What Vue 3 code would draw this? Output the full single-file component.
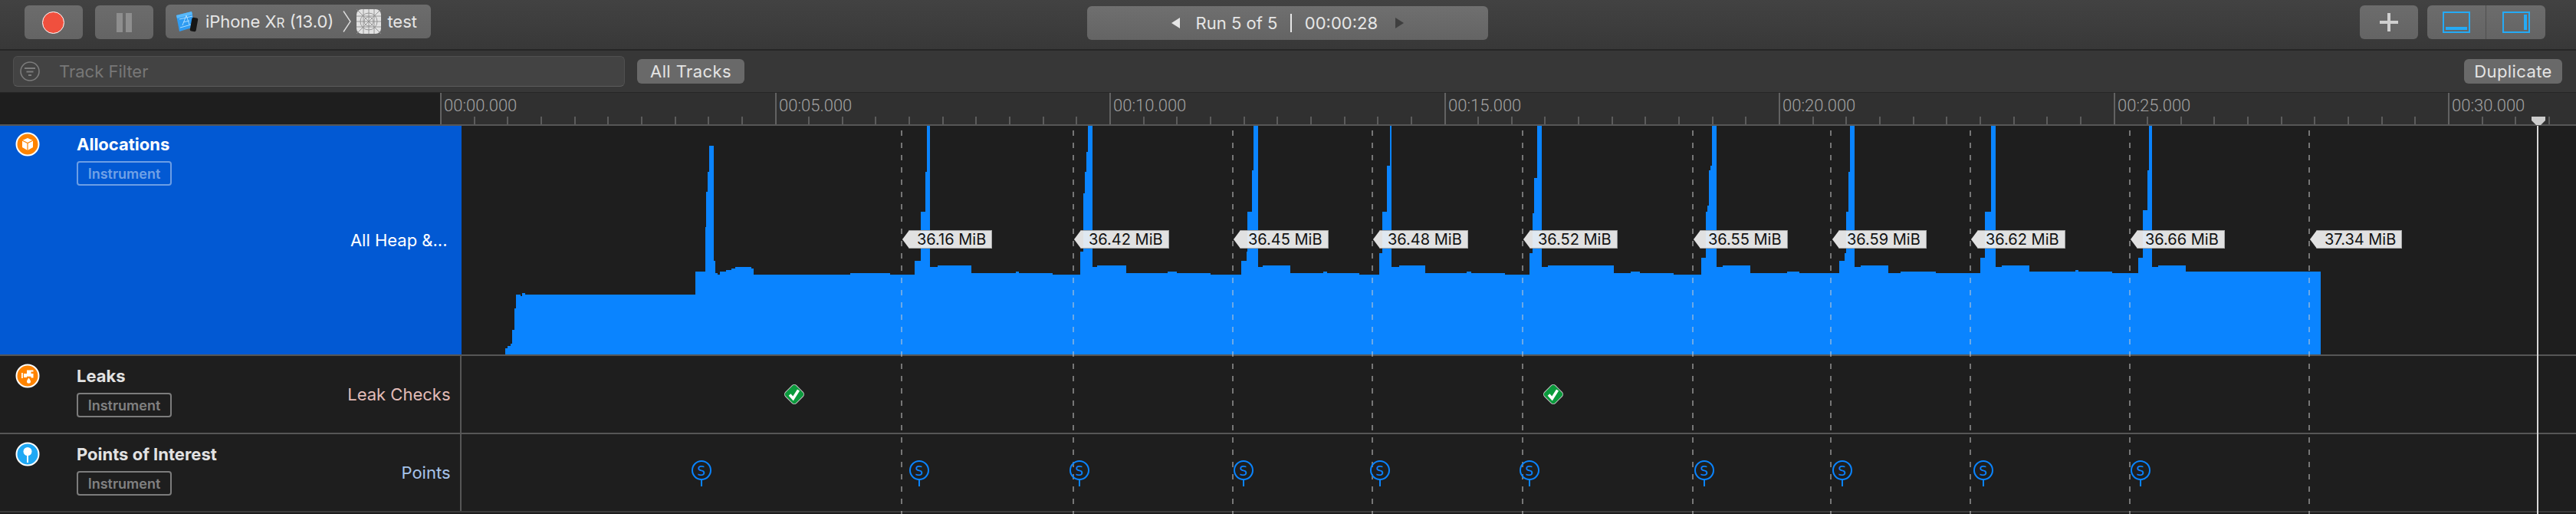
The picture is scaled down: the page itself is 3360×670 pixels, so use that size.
<template>
  <div class="app">
    <div class="toolbar">
      <div class="btn btn-record"><span class="rec-dot"></span></div>
      <div class="btn btn-pause"><span class="bar"></span><span class="bar"></span></div>
      <div class="scheme">
        <svg class="scheme-app" width="30" height="28" viewBox="0 0 30 28">
          <path d="M1 6 L21 1 L25 21 L5 27 Z" fill="#2f9cf2" />
          <path d="M1 6 L21 1 L22 5 L2 10 Z" fill="#59b9fa" />
          <path d="M9 19 L14 6 L18 18 M10 15 L18 13 M5 11 L22 7 M6 22 L24 17" stroke="#a9dcff" stroke-width="1" fill="none" />
          <rect x="20" y="9" width="8" height="18" rx="2" transform="rotate(10 24 18)" fill="#161616" />
        </svg>
        <span class="scheme-text">iPhone X<span class="small-r">R</span> (13.0)</span>
        <svg class="scheme-chevron" width="11" height="28" viewBox="0 0 11 28">
          <path d="M1 0.5 L10 14 L1 27.5" fill="none" stroke="#dcdcdc" stroke-width="1.4" />
        </svg>
        <svg class="scheme-grid" width="32" height="32" viewBox="0 0 32 32">
          <rect width="32" height="32" rx="7" fill="#e2e2e2" />
          <g fill="none" stroke="#8f8f8f" stroke-width="0.9">
            <path d="M0 9H32M0 16H32M0 23H32M9 0V32M16 0V32M23 0V32M0 0L32 32M32 0L0 32" />
            <circle cx="16" cy="16" r="6" />
            <circle cx="16" cy="16" r="11" />
          </g>
        </svg>
        <span class="scheme-text scheme-name">test</span>
      </div>
      <div class="run">
        <span class="tri tri-left"></span>
        <span class="run-text">Run 5 of 5</span>
        <span class="run-sep"></span>
        <span class="run-text">00:00:28</span>
        <span class="tri tri-right"></span>
      </div>
      <div class="btn btn-plus">
        <svg width="24" height="24" viewBox="0 0 24 24"><path d="M12 0V24M0 12H24" stroke="#cfcfcf" stroke-width="4" /></svg>
      </div>
      <div class="segment">
        <div class="seg-item">
          <svg width="36" height="28" viewBox="0 0 36 28">
            <rect x="1" y="1" width="34" height="26" fill="none" stroke="#25aaf5" stroke-width="2" />
            <rect x="4" y="20" width="28" height="4" fill="#25aaf5" />
          </svg>
        </div>
        <div class="seg-item seg-last">
          <svg width="36" height="28" viewBox="0 0 36 28">
            <rect x="1" y="1" width="34" height="26" fill="none" stroke="#25aaf5" stroke-width="2" />
            <rect x="28" y="4" width="4" height="20" fill="#25aaf5" />
          </svg>
        </div>
      </div>
    </div>

    <div class="filter-row">
      <div class="filter-field">
        <svg class="filter-icon" width="26" height="26" viewBox="0 0 26 26">
          <circle cx="13" cy="13" r="12" fill="none" stroke="#7c7c7c" stroke-width="1.6" />
          <path d="M6 9H20M8.5 13.5H17.5M11 18H15" stroke="#7c7c7c" stroke-width="1.8" />
        </svg>
        <span class="filter-text">Track Filter</span>
      </div>
      <div class="small-btn all-tracks">All Tracks</div>
      <div class="small-btn duplicate">Duplicate</div>
    </div>

    <div class="ruler-row">
      <div class="ruler-gap"></div>
      <div class="ruler">
        <template v-for="t in ticks" :key="t.x">
          <span class="tick" :class="{ major: t.label }" :style="{ left: t.x + 'px' }"></span>
          <span v-if="t.label" class="tick-label" :style="{ left: t.x + 5 + 'px' }">{{ t.label }}</span>
        </template>
      </div>
    </div>

    <div class="track track-alloc">
      <div class="side side-selected">
        <svg class="inst-icon" width="32" height="32" viewBox="0 0 32 32">
          <circle cx="16" cy="16" r="14.5" fill="#ff8400" stroke="#fff" stroke-width="2" />
          <path d="M16 8 L23 11 V20 L16 24 L9 20 V11 Z" fill="#fff" />
          <path d="M9 11 L16 14.5 L23 11 M16 14.5 V24" stroke="#ff8400" stroke-width="1.2" fill="none" />
        </svg>
        <div class="side-names">
          <div class="side-title">Allocations</div>
          <div class="side-badge">Instrument</div>
        </div>
        <div class="side-label label-heap">All Heap &amp;...</div>
      </div>
      <div class="lane">
        <svg width="2759" height="298" viewBox="601 164 2759 298" class="chart">
          <path :d="chartPath" fill="#0a84ff" />
        </svg>
      </div>
    </div>

    <div class="track track-small">
      <div class="side">
        <svg class="inst-icon" width="32" height="32" viewBox="0 0 32 32">
          <circle cx="16" cy="16" r="14.5" fill="#ff8400" stroke="#fff" stroke-width="2" />
          <path d="M15 8.5H23.5V10.5H20.5V13H23.5V18.5H20.5V16.8H15V18H11V13H15ZM8 12H9.8V19H8Z" fill="#fff" />
          <path d="M17.5 18.5 C16 21 15 22 15 23.2 A2.5 2.5 0 0 0 20 23.2 C20 22 19 21 17.5 18.5Z" fill="#fff" />
        </svg>
        <div class="side-names">
          <div class="side-title">Leaks</div>
          <div class="side-badge">Instrument</div>
        </div>
        <div class="side-label label-leak">Leak Checks</div>
      </div>
      <div class="lane"></div>
    </div>

    <div class="track track-small track-last">
      <div class="side">
        <svg class="inst-icon" width="32" height="32" viewBox="0 0 32 32">
          <circle cx="16" cy="16" r="14.5" fill="#1fa8f4" stroke="#fff" stroke-width="2" />
          <circle cx="16" cy="12.5" r="5.5" fill="#fff" />
          <rect x="15" y="16" width="2" height="11" fill="#fff" />
        </svg>
        <div class="side-names">
          <div class="side-title">Points of Interest</div>
          <div class="side-badge">Instrument</div>
        </div>
        <div class="side-label label-points">Points</div>
      </div>
      <div class="lane"></div>
    </div>

    <div class="overlay">
      <svg class="dashes" width="3360" height="670">
        <line v-for="d in dashes" :key="d" :x1="d" :x2="d" y1="170" y2="670" />
      </svg>
      <div
        v-for="m in marks"
        :key="m.text"
        class="tag"
        :style="{ left: m.x + 'px' }"
      >{{ m.text }}</div>
      <svg
        v-for="x in checks"
        :key="x"
        class="check"
        :style="{ left: x - 17 + 'px' }"
        width="34"
        height="34"
        viewBox="0 0 34 34"
      >
        <rect x="7" y="7" width="20" height="20" rx="4" transform="rotate(45 17 17)" fill="#0a9a3c" stroke="#c4c4c4" stroke-width="1" />
        <path d="M11 17.5 L15.5 22.5 L22.5 11.5" fill="none" stroke="#fff" stroke-width="3.6" />
      </svg>
      <svg
        v-for="x in pins"
        :key="x"
        class="pin"
        :style="{ left: x - 14 + 'px' }"
        width="28"
        height="36"
        viewBox="0 0 28 36"
      >
        <circle cx="14" cy="14" r="12" fill="none" stroke="#0a84ff" stroke-width="2" />
        <line x1="14" x2="14" y1="26" y2="35" stroke="#0a84ff" stroke-width="2" />
        <text x="14" y="20.5" text-anchor="middle" class="pin-s">S</text>
      </svg>
      <div class="playhead"></div>
      <svg class="playhead-top" width="18" height="11" viewBox="0 0 18 11">
        <path d="M0 0H18V5L12 11H6L0 5Z" fill="#cccccc" />
      </svg>
    </div>
  </div>
</template>

<script setup>
import { computed } from 'vue';

// ruler: 87.3px per second, starts at page x 574
const PX_PER_SEC = 87.3;
const ticks = [];
for (let i = 0; i <= 64; i++) {
  const sec = i / 2;
  const label = i % 10 === 0 ? `00:${String(sec).padStart(2, '0')}.000` : '';
  ticks.push({ x: Math.round(sec * PX_PER_SEC), label });
}

const dashes = [1176, 1400, 1608, 1790, 1986, 2208, 2388, 2570, 2778, 3012];

const marks = [
  { x: 1177, text: '36.16 MiB' },
  { x: 1401, text: '36.42 MiB' },
  { x: 1609, text: '36.45 MiB' },
  { x: 1791, text: '36.48 MiB' },
  { x: 1987, text: '36.52 MiB' },
  { x: 2209, text: '36.55 MiB' },
  { x: 2390, text: '36.59 MiB' },
  { x: 2571, text: '36.62 MiB' },
  { x: 2779, text: '36.66 MiB' },
  { x: 3013, text: '37.34 MiB' },
];

const checks = [1036, 2026];
const pins = [915, 1199, 1408, 1622, 1800, 1995, 2223, 2403, 2587, 2792];

// [x, y] steps of the heap graph, read off in page coordinates
const steps = [
  [658, 454], [661, 451], [665, 448], [667, 430], [670, 402], [672, 384], [678, 386], [680, 382], [684, 384],
  [906, 354], [919, 296], [920, 250], [922, 224], [924, 190], [930, 340], [932, 356], [935, 358], [938, 354],
  [946, 352], [953, 350], [958, 348], [979, 350], [982, 358], [1108, 356], [1160, 358],
  [1192, 340], [1200, 276], [1206, 224], [1208, 164], [1212, 348], [1222, 346], [1266, 356], [1324, 354], [1328, 356], [1372, 358],
  [1408, 328], [1412, 252], [1414, 224], [1416, 198], [1418, 164], [1424, 348], [1430, 346], [1468, 356], [1522, 354], [1534, 356], [1578, 358],
  [1618, 340], [1625, 328], [1626, 276], [1632, 222], [1634, 164], [1640, 348], [1646, 346], [1682, 356], [1725, 354], [1730, 356], [1772, 358],
  [1798, 330], [1802, 276], [1808, 216], [1812, 164], [1814, 348], [1824, 346], [1858, 356], [1912, 354], [1918, 356], [1962, 358],
  [1994, 330], [1998, 278], [2000, 232], [2004, 164], [2010, 348], [2018, 346], [2104, 356], [2126, 354], [2138, 356], [2182, 358],
  [2218, 336], [2224, 276], [2226, 268], [2228, 222], [2230, 216], [2232, 164], [2238, 348], [2246, 346], [2282, 356], [2330, 354], [2346, 356],
  [2398, 340], [2405, 330], [2407, 276], [2410, 224], [2412, 164], [2418, 348], [2426, 346], [2462, 356], [2478, 354], [2524, 356],
  [2582, 336], [2588, 276], [2596, 164], [2602, 348], [2610, 346], [2646, 354], [2706, 352], [2710, 354], [2754, 356],
  [2788, 336], [2794, 274], [2800, 222], [2802, 164], [2806, 348], [2814, 346], [2850, 354],
];

const chartPath = computed(() => {
  let d = `M${steps[0][0]} 462`;
  for (const [x, y] of steps) d += `H${x}V${y}`;
  return d + 'H3026V462Z';
});
</script>

<style>
html, body {
  margin: 0;
  background: #1e1e1e;
}
</style>

<style scoped>
.app {
  position: relative;
  width: 3360px;
  height: 670px;
  overflow: hidden;
  display: flex;
  flex-direction: column;
  background: #1e1e1e;
  font-family: Inter, "Liberation Sans", sans-serif;
}

/* toolbar */
.toolbar {
  height: 64px;
  box-sizing: border-box;
  display: flex;
  align-items: flex-start;
  padding: 7px 40px 0 32px;
  background: linear-gradient(#424242, #383838);
}
.btn {
  width: 76px;
  height: 44px;
  border-radius: 6px;
  background: linear-gradient(#6c6c6c, #646464);
  display: flex;
  align-items: center;
  justify-content: center;
}
.btn-pause {
  margin-left: 16px;
  gap: 4px;
}
.rec-dot {
  width: 27px;
  height: 27px;
  border-radius: 50%;
  background: #f0503e;
  border: 1.5px solid #fff;
}
.bar {
  width: 8px;
  height: 25px;
  background: #8e8e8e;
}
.scheme {
  margin: -1px 0 0 16px;
  width: 346px;
  height: 44px;
  box-sizing: border-box;
  border-radius: 6px;
  padding-left: 13px;
  background: linear-gradient(#6c6c6c, #646464);
  display: flex;
  align-items: center;
  color: #e6e6e6;
}
.scheme-text {
  font-size: 22px;
  margin-left: 9px;
  white-space: nowrap;
}
.small-r {
  font-size: 17px;
}
.scheme-chevron {
  margin-left: 12px;
}
.scheme-grid {
  margin-left: 7px;
}
.scheme-name {
  margin-left: 8px;
}
.run {
  margin: 1px 0 0 856px;
  width: 524px;
  height: 44px;
  border-radius: 6px;
  background: linear-gradient(#6f6f6f, #646464);
  display: flex;
  align-items: center;
  justify-content: center;
  color: #e6e6e6;
}
.run-text {
  font-size: 22px;
}
.run-sep {
  width: 1.5px;
  height: 24px;
  background: #e6e6e6;
  margin: 0 17px;
}
.tri {
  width: 0;
  height: 0;
  border-top: 7.5px solid transparent;
  border-bottom: 7.5px solid transparent;
}
.tri-left {
  border-right: 11px solid #e6e6e6;
  margin-right: 21px;
}
.tri-right {
  border-left: 11px solid #3f3f3f;
  margin-left: 23px;
}
.btn-plus {
  margin-left: 1137px;
}
.segment {
  margin-left: 12px;
  width: 154px;
  height: 44px;
  border-radius: 6px;
  background: linear-gradient(#6c6c6c, #646464);
  display: flex;
}
.seg-item {
  width: 77px;
  display: flex;
  align-items: center;
  justify-content: center;
  border-right: 1px solid #4f4f4f;
  box-sizing: border-box;
}
.seg-last {
  border-right: 0;
}

/* filter row */
.filter-row {
  height: 54px;
  box-sizing: content-box;
  border-top: 2px solid #262626;
  border-bottom: 1px solid #262626;
  background: #373737;
  display: flex;
  align-items: center;
  padding-left: 17px;
}
.filter-field {
  width: 798px;
  height: 40px;
  box-sizing: border-box;
  border: 1px solid #505050;
  border-bottom-color: #5c5c5c;
  border-radius: 6px;
  background: #434343;
  display: flex;
  align-items: center;
  padding-left: 8px;
}
.filter-text {
  margin-left: 25px;
  font-size: 22px;
  color: #777;
}
.small-btn {
  height: 32px;
  border-radius: 6px;
  background: #696969;
  color: #e4e4e4;
  font-size: 22px;
  letter-spacing: 0.4px;
  display: flex;
  align-items: center;
  justify-content: center;
}
.all-tracks {
  margin-left: 16px;
  width: 140px;
}
.duplicate {
  margin-left: 2243px;
  width: 128px;
}

/* ruler */
.ruler-row {
  height: 41px;
  display: flex;
  border-bottom: 2px solid #565656;
}
.ruler-gap {
  width: 574px;
}
.ruler {
  flex: 1;
  position: relative;
  background: #303030;
}
.tick {
  position: absolute;
  bottom: 0;
  width: 2px;
  height: 10px;
  background: #5c5c5c;
}
.tick.major {
  height: 41px;
  background: #626262;
}
.tick-label {
  position: absolute;
  top: 4px;
  font-family: Roboto, sans-serif;
  font-size: 22px;
  font-weight: 300;
  color: #a2a2a2;
  white-space: nowrap;
}

/* tracks */
.track {
  display: flex;
  border-bottom: 2px solid #565656;
}
.track-alloc {
  height: 298px;
}
.track-small {
  height: 100px;
}
.track-last {
  border-bottom-color: #3a3a3a;
}
.side {
  width: 601.5px;
  flex: none;
  box-sizing: border-box;
  display: flex;
  padding: 10px 12px 0 20px;
  color: #e2e2e2;
  border-right: 2px solid #565656;
}
.side-selected {
  padding-top: 8px;
  background: #0259d3;
  color: #fff;
  border-right: 0;
}
.inst-icon {
  flex: none;
}
.side-names {
  margin: 2px 0 0 48px;
}
.side-title {
  font-size: 22px;
  font-weight: 700;
  line-height: 28px;
  white-space: nowrap;
}
.side-badge {
  margin-top: 8px;
  width: 124px;
  height: 32px;
  box-sizing: border-box;
  border: 2px solid rgba(255, 255, 255, 0.42);
  border-radius: 4px;
  color: rgba(255, 255, 255, 0.45);
  font-size: 18px;
  font-weight: 600;
  display: flex;
  align-items: center;
  justify-content: center;
}
.side-label {
  margin-left: auto;
  align-self: center;
  margin-top: -10px;
  font-size: 22px;
  white-space: nowrap;
}
.label-heap {
  color: #fff;
  margin-top: -8px;
  margin-right: 6px;
}
.label-leak {
  color: #e2bcb8;
}
.label-points {
  color: #a6c3ea;
}
.lane {
  flex: 1;
  min-width: 0;
}
.chart {
  display: block;
}

/* timeline overlay, page coordinates */
.overlay {
  position: absolute;
  inset: 0;
  pointer-events: none;
}
.dashes {
  position: absolute;
  left: 0;
  top: 0;
}
.dashes line {
  stroke: rgba(205, 205, 205, 0.5);
  stroke-width: 2;
  stroke-dasharray: 7 9;
}
.tag {
  position: absolute;
  top: 300px;
  height: 24px;
  box-sizing: border-box;
  padding: 0 8px 0 19px;
  display: flex;
  align-items: center;
  background: rgba(240, 240, 240, 0.93);
  box-shadow: inset 0 0 0 1px #a8a8a8;
  clip-path: polygon(9px 0, 100% 0, 100% 100%, 9px 100%, 0 50%);
  color: #111;
  font-size: 20px;
  white-space: nowrap;
}
.check {
  position: absolute;
  top: 497px;
}
.pin {
  position: absolute;
  top: 599px;
}
.pin-s {
  font-family: "DejaVu Sans", sans-serif;
  font-size: 17px;
  fill: #0a84ff;
}
.playhead {
  position: absolute;
  left: 3309px;
  top: 164px;
  bottom: 0;
  width: 2px;
  background: #d8d8d8;
}
.playhead-top {
  position: absolute;
  left: 3302px;
  top: 152px;
}
</style>
